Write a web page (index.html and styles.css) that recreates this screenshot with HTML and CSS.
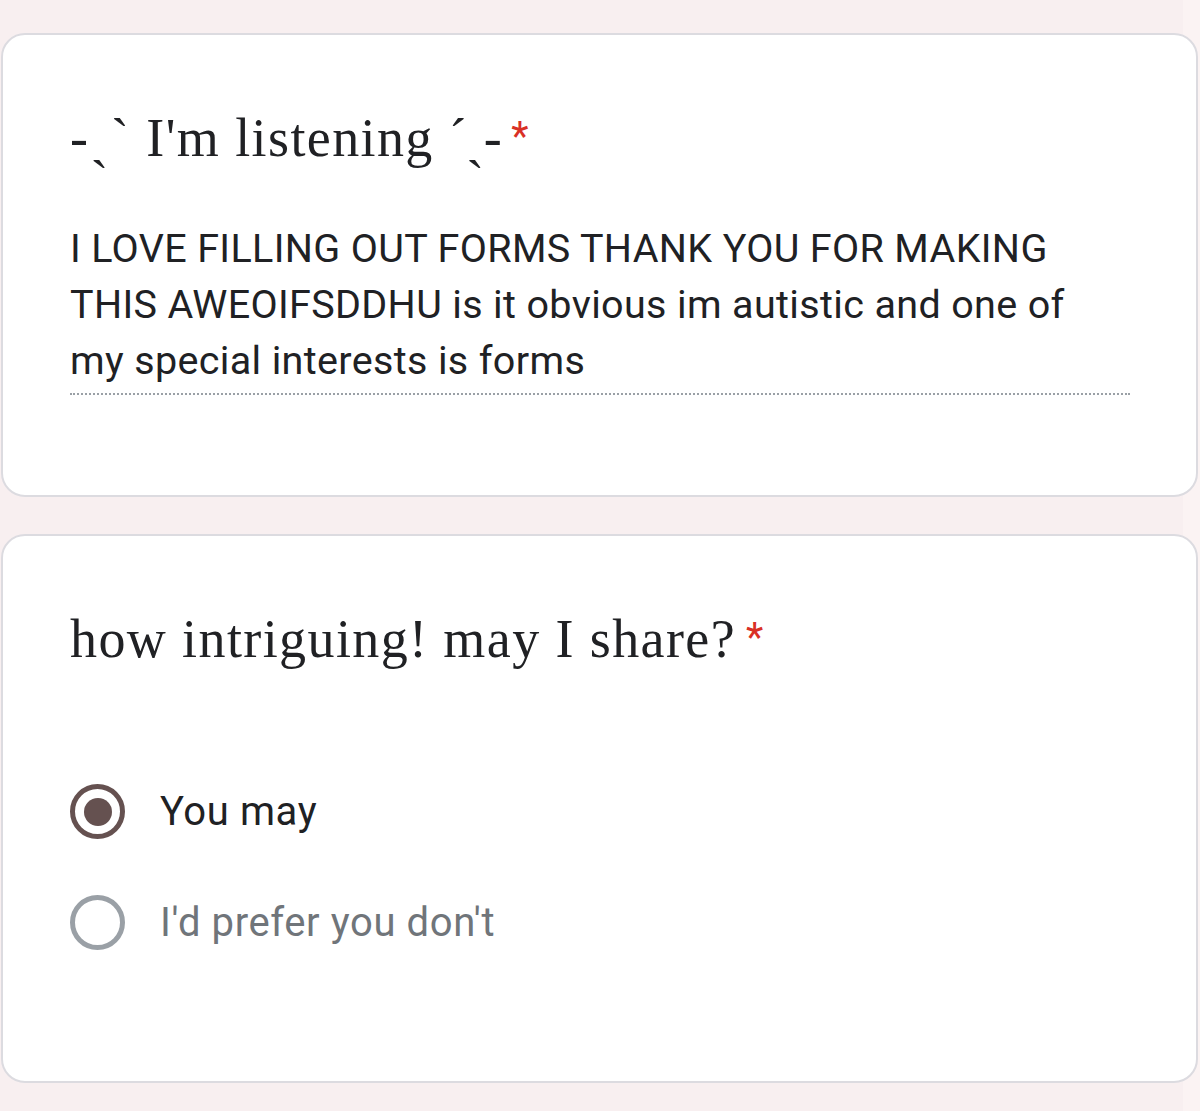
FILE: index.html
```html
<!DOCTYPE html>
<html lang="en">
<head>
<meta charset="utf-8">
<title>Form</title>
<link rel="stylesheet" href="styles.css">
</head>
<body>
<main class="page">
  <section class="card">
    <h2 class="q-title"><span class="deco">-ˏˋ</span> I'm listening <span class="deco-end">ˊˎ-</span><span class="req">*</span></h2>
    <div class="answer"><p class="answer-text">I LOVE FILLING OUT FORMS THANK YOU FOR MAKING THIS AWEOIFSDDHU is it obvious im autistic and one of my special interests is forms</p></div>
  </section>
  <section class="card">
    <h2 class="q-title">how intriguing! may I share?<span class="req">*</span></h2>
    <div class="options">
      <div class="option">
        <span class="radio radio-on"><span class="dot"></span></span>
        <span class="label">You may</span>
      </div>
      <div class="option">
        <span class="radio"></span>
        <span class="label label-muted">I'd prefer you don't</span>
      </div>
    </div>
  </section>
</main>
</body>
</html>
```

FILE: styles.css
```css
html, body {
  margin: 0;
  padding: 0;
}
body {
  background: linear-gradient(to right, #f8eff0 0, #f8eff0 1183px, #fbf3f3 1183px);
  width: 1200px;
  height: 1111px;
  overflow: hidden;
}
.page {
  padding: 33px 2px 0 1px;
  display: flex;
  flex-direction: column;
  gap: 37px;
}
.card {
  background: #fff;
  border: 2px solid #dcdbe0;
  border-radius: 24px;
  padding: 69px 66px 100px 67px;
}
.q-title {
  margin: 0;
  font-family: "Liberation Serif", "DejaVu Serif", serif;
  font-weight: 400;
  font-size: 54px;
  line-height: 65px;
  letter-spacing: 1.4px;
  color: #202124;
}
.deco {
  letter-spacing: 2.5px;
}
.deco-end {
  letter-spacing: -0.5px;
}
.req {
  font-family: Roboto, "Liberation Sans", sans-serif;
  color: #d93025;
  font-size: 40px;
  padding-left: 10px;
  vertical-align: 6px;
  letter-spacing: 0;
}
.answer {
  margin-top: 50px;
  padding-bottom: 4px;
  border-bottom: 2px dotted #9aa0a6;
}
.answer-text {
  margin: 0;
  max-width: 1040px;
  font-family: Roboto, "Liberation Sans", sans-serif;
  font-size: 39.5px;
  line-height: 56px;
  letter-spacing: 0.35px;
  color: #202124;
}
.options {
  margin-top: 84px;
  margin-bottom: 3px;
  display: flex;
  flex-direction: column;
}
.option {
  height: 111px;
  display: flex;
  align-items: center;
  gap: 35px;
}
.radio {
  box-sizing: border-box;
  width: 55px;
  height: 55px;
  border-radius: 50%;
  border: 5px solid #9aa0a6;
  display: flex;
  align-items: center;
  justify-content: center;
  flex: none;
}
.radio-on {
  border-color: #655150;
}
.dot {
  width: 28px;
  height: 28px;
  border-radius: 50%;
  background: #655150;
}
.label {
  font-family: Roboto, "Liberation Sans", sans-serif;
  font-size: 40px;
  letter-spacing: 0.6px;
  color: #202124;
}
.label-muted {
  color: #70757a;
}
```
